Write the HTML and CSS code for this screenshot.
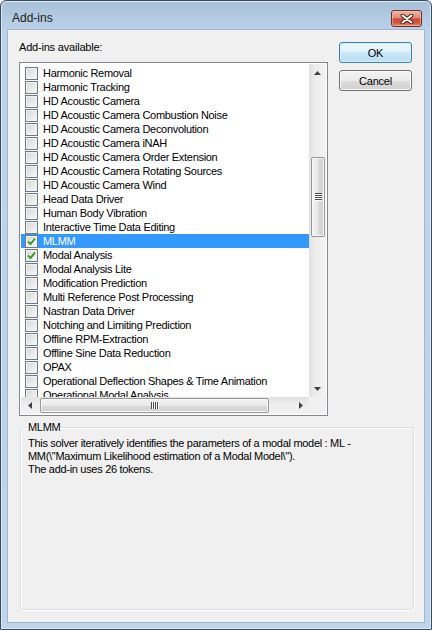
FILE: index.html
```html
<!DOCTYPE html>
<html>
<head>
<meta charset="utf-8">
<title>Add-ins</title>
<link rel="stylesheet" href="styles.css">
</head>
<body>
<div class="window">
  <div class="titlebar">
    <span class="title">Add-ins</span>
    <div class="close">
      <svg width="14" height="10" viewBox="0 0 14 10">
        <path d="M2.5 1.5 L11.5 8.5 M11.5 1.5 L2.5 8.5" stroke="#4a1a14" stroke-width="3.8" stroke-linecap="round" fill="none"/>
        <path d="M2.5 1.5 L11.5 8.5 M11.5 1.5 L2.5 8.5" stroke="#ffffff" stroke-width="2" stroke-linecap="round" fill="none"/>
      </svg>
    </div>
  </div>
  <div class="client">
    <div class="top">
      <div class="left">
        <div class="label">Add-ins available:</div>
        <div class="listbox">
          <div class="rows">
            <div class="row"><span class="cb"></span><span>Harmonic Removal</span></div>
            <div class="row"><span class="cb"></span><span>Harmonic Tracking</span></div>
            <div class="row"><span class="cb"></span><span>HD Acoustic Camera</span></div>
            <div class="row"><span class="cb"></span><span>HD Acoustic Camera Combustion Noise</span></div>
            <div class="row"><span class="cb"></span><span>HD Acoustic Camera Deconvolution</span></div>
            <div class="row"><span class="cb"></span><span>HD Acoustic Camera iNAH</span></div>
            <div class="row"><span class="cb"></span><span>HD Acoustic Camera Order Extension</span></div>
            <div class="row"><span class="cb"></span><span>HD Acoustic Camera Rotating Sources</span></div>
            <div class="row"><span class="cb"></span><span>HD Acoustic Camera Wind</span></div>
            <div class="row"><span class="cb"></span><span>Head Data Driver</span></div>
            <div class="row"><span class="cb"></span><span>Human Body Vibration</span></div>
            <div class="row"><span class="cb"></span><span>Interactive Time Data Editing</span></div>
            <div class="row sel"><span class="cb"><svg width="11" height="11" viewBox="0 0 11 11"><path d="M2 5.5 L4.5 8 L9 2.5" stroke="#2f9a1f" stroke-width="1.9" fill="none"/></svg></span><span>MLMM</span></div>
            <div class="row"><span class="cb"><svg width="11" height="11" viewBox="0 0 11 11"><path d="M2 5.5 L4.5 8 L9 2.5" stroke="#2f9a1f" stroke-width="1.9" fill="none"/></svg></span><span>Modal Analysis</span></div>
            <div class="row"><span class="cb"></span><span>Modal Analysis Lite</span></div>
            <div class="row"><span class="cb"></span><span>Modification Prediction</span></div>
            <div class="row"><span class="cb"></span><span>Multi Reference Post Processing</span></div>
            <div class="row"><span class="cb"></span><span>Nastran Data Driver</span></div>
            <div class="row"><span class="cb"></span><span>Notching and Limiting Prediction</span></div>
            <div class="row"><span class="cb"></span><span>Offline RPM-Extraction</span></div>
            <div class="row"><span class="cb"></span><span>Offline Sine Data Reduction</span></div>
            <div class="row"><span class="cb"></span><span>OPAX</span></div>
            <div class="row"><span class="cb"></span><span>Operational Deflection Shapes &amp; Time Animation</span></div>
            <div class="row"><span class="cb"></span><span>Operational Modal Analysis</span></div>
          </div>
          <div class="vscroll">
            <div class="arrow"><svg width="7" height="4" viewBox="0 0 7 4"><path d="M3.5 0 L7 4 L0 4Z" fill="#404040"/></svg></div>
            <div class="vtrack">
              <div class="vthumb">
                <svg width="7" height="8" viewBox="0 0 7 8"><path d="M0 0.5H7M0 2.5H7M0 4.5H7M0 6.5H7" stroke="#4b4b4b" stroke-width="1"/><path d="M0 1.5H7M0 3.5H7M0 5.5H7M0 7.5H7" stroke="#ffffff" stroke-width="1"/></svg>
              </div>
            </div>
            <div class="arrow"><svg width="7" height="4" viewBox="0 0 7 4"><path d="M0 0 L7 0 L3.5 4Z" fill="#404040"/></svg></div>
          </div>
          <div class="hscroll">
            <div class="harrow"><svg width="4" height="7" viewBox="0 0 4 7"><path d="M0 3.5 L4 0 L4 7Z" fill="#404040"/></svg></div>
            <div class="hthumb">
              <svg width="8" height="7" viewBox="0 0 8 7"><path d="M0.5 0V7M2.5 0V7M4.5 0V7M6.5 0V7" stroke="#4b4b4b" stroke-width="1"/><path d="M1.5 0V7M3.5 0V7M5.5 0V7M7.5 0V7" stroke="#ffffff" stroke-width="1"/></svg>
            </div>
            <div class="htrack"></div>
            <div class="harrow"><svg width="4" height="7" viewBox="0 0 4 7"><path d="M0 0 L4 3.5 L0 7Z" fill="#404040"/></svg></div>
          </div>
          <div class="corner"></div>
        </div>
      </div>
      <div class="buttons">
        <div class="btn default">OK</div>
        <div class="btn">Cancel</div>
      </div>
    </div>
    <fieldset class="group">
      <legend>MLMM</legend>
      <p>This solver iteratively identifies the parameters of a modal model : ML -<br>MM(\"Maximum Likelihood estimation of a Modal Model\").<br>The add-in uses 26 tokens.</p>
    </fieldset>
  </div>
</div>
</body>
</html>
```
FILE: styles.css
```css
html, body {
  margin: 0;
  padding: 0;
  background: #ffffff;
}
body {
  font-family: "Liberation Sans", Arial, sans-serif;
  font-size: 11px;
  color: #000;
}
.window {
  width: 432px;
  height: 630px;
  box-sizing: border-box;
  border: 1px solid #3b4c5f;
  border-radius: 6px 6px 0 0;
  background: linear-gradient(#a9c0d9, #bcd2ea 30px, #bfd5ec);
  box-shadow: inset 0 0 0 1px #dbe8f6;
  display: flex;
  flex-direction: column;
  overflow: hidden;
}
.titlebar {
  height: 29px;
  box-sizing: border-box;
  padding: 9px 9px 0 11px;
  display: flex;
  justify-content: space-between;
  align-items: flex-start;
  flex: none;
}
.title {
  font-size: 12px;
  line-height: 16px;
  color: #1b1b1b;
}
.close {
  width: 31px;
  height: 17px;
  box-sizing: border-box;
  border: 1px solid #6e2b22;
  border-radius: 3px;
  background: linear-gradient(#eab2a5, #dd8e7c 45%, #c84a3b 52%, #cf5843 80%, #e38c70);
  box-shadow: inset 0 0 0 1px rgba(255, 220, 210, 0.45);
  display: flex;
  align-items: center;
  justify-content: center;
}
.close svg { display: block; }
.client {
  flex: 1;
  margin: 0 7px 7px;
  background: #f0f0f0;
  box-shadow: 0 0 0 1px #a3b8cf;
  display: flex;
  flex-direction: column;
  padding: 10px 0 12px 11px;
  min-height: 0;
}
.top {
  display: flex;
  gap: 11px;
  flex: none;
}
.left {
  width: 309px;
}
.label {
  line-height: 14px;
  margin-bottom: 8px;
  letter-spacing: -0.2px;
}
.listbox {
  width: 309px;
  height: 354px;
  box-sizing: border-box;
  border: 1px solid #828790;
  padding: 1px;
  background: #ffffff;
  display: grid;
  grid-template-columns: 288px 17px;
  grid-template-rows: 333px 17px;
}
.rows {
  grid-row: 1;
  grid-column: 1;
  overflow: hidden;
  padding-top: 2px;
}
.row {
  height: 14px;
  display: flex;
  align-items: center;
  white-space: nowrap;
  letter-spacing: -0.3px;
  line-height: 14px;
}
.row.sel {
  background: #3399ff;
  color: #ffffff;
}
.cb {
  width: 13px;
  height: 13px;
  box-sizing: border-box;
  margin: 0 5px 0 4px;
  flex: none;
  border: 1px solid #6b7886;
  background: linear-gradient(135deg, #d6d6d6, #f8f8f8);
  box-shadow: inset 0 0 0 1px #f3f3f3;
  display: flex;
  align-items: center;
  justify-content: center;
}
.cb svg { display: block; }
.vscroll {
  grid-row: 1;
  grid-column: 2;
  display: flex;
  flex-direction: column;
  background: linear-gradient(to right, #e2e2e2, #ededed 40%, #f3f3f3);
}
.arrow {
  height: 17px;
  flex: none;
  display: flex;
  align-items: center;
  justify-content: center;
}
.arrow svg, .harrow svg { display: block; }
.vtrack {
  flex: 1;
}
.vthumb {
  margin: 76px 1px 0 2px;
  width: 14px;
  height: 80px;
  box-sizing: border-box;
  border: 1px solid #979797;
  border-radius: 2px;
  background: linear-gradient(to right, #f3f3f3, #e8e8e8 50%, #dadada 51%, #d2d2d2);
  box-shadow: inset 0 0 0 1px #f9f9f9;
  display: flex;
  align-items: center;
  justify-content: center;
}
.vthumb svg { display: block; }
.hscroll {
  grid-row: 2;
  grid-column: 1;
  display: flex;
  background: linear-gradient(#e2e2e2, #ededed 40%, #f3f3f3);
}
.harrow {
  width: 17px;
  flex: none;
  display: flex;
  align-items: center;
  justify-content: center;
}
.hthumb {
  margin: 1px 0 1px 2px;
  width: 229px;
  box-sizing: border-box;
  border: 1px solid #979797;
  border-radius: 2px;
  background: linear-gradient(#f3f3f3, #e8e8e8 50%, #dadada 51%, #d2d2d2);
  box-shadow: inset 0 0 0 1px #f9f9f9;
  display: flex;
  align-items: center;
  justify-content: center;
}
.hthumb svg { display: block; }
.htrack {
  flex: 1;
}
.corner {
  grid-row: 2;
  grid-column: 2;
  background: #f0f0f0;
}
.buttons {
  display: flex;
  flex-direction: column;
  gap: 7px;
  padding-top: 2px;
}
.btn {
  width: 73px;
  height: 21px;
  box-sizing: border-box;
  border: 1px solid #707070;
  border-radius: 3px;
  background: linear-gradient(#f2f2f2, #ebebeb 50%, #dddddd 50%, #cfcfcf);
  box-shadow: inset 0 0 0 1px #fbfbfb;
  display: flex;
  align-items: center;
  justify-content: center;
  letter-spacing: -0.2px;
  line-height: 14px;
}
.btn.default {
  border-color: #3c7fb1;
  background: linear-gradient(#eef8fe, #e0f2fc 50%, #cbe9fa 50%, #b9def4);
  box-shadow: inset 0 0 0 1px #d4eefc;
}
.group {
  flex: 1;
  margin: 5px 0 0 1px;
  width: 394px;
  min-width: 0;
  box-sizing: border-box;
  border: 1px solid #d5dfe5;
  border-radius: 3px;
  padding: 0 6px 0 7px;
  box-shadow: 1px 1px 0 #ffffff, inset 1px 1px 0 #ffffff;
}
.group legend {
  padding: 0 2px;
  margin-left: -2px;
  line-height: 13px;
  letter-spacing: -0.3px;
}
.group p {
  margin: 3px 0 0;
  line-height: 13px;
  letter-spacing: -0.3px;
  white-space: nowrap;
}
```
